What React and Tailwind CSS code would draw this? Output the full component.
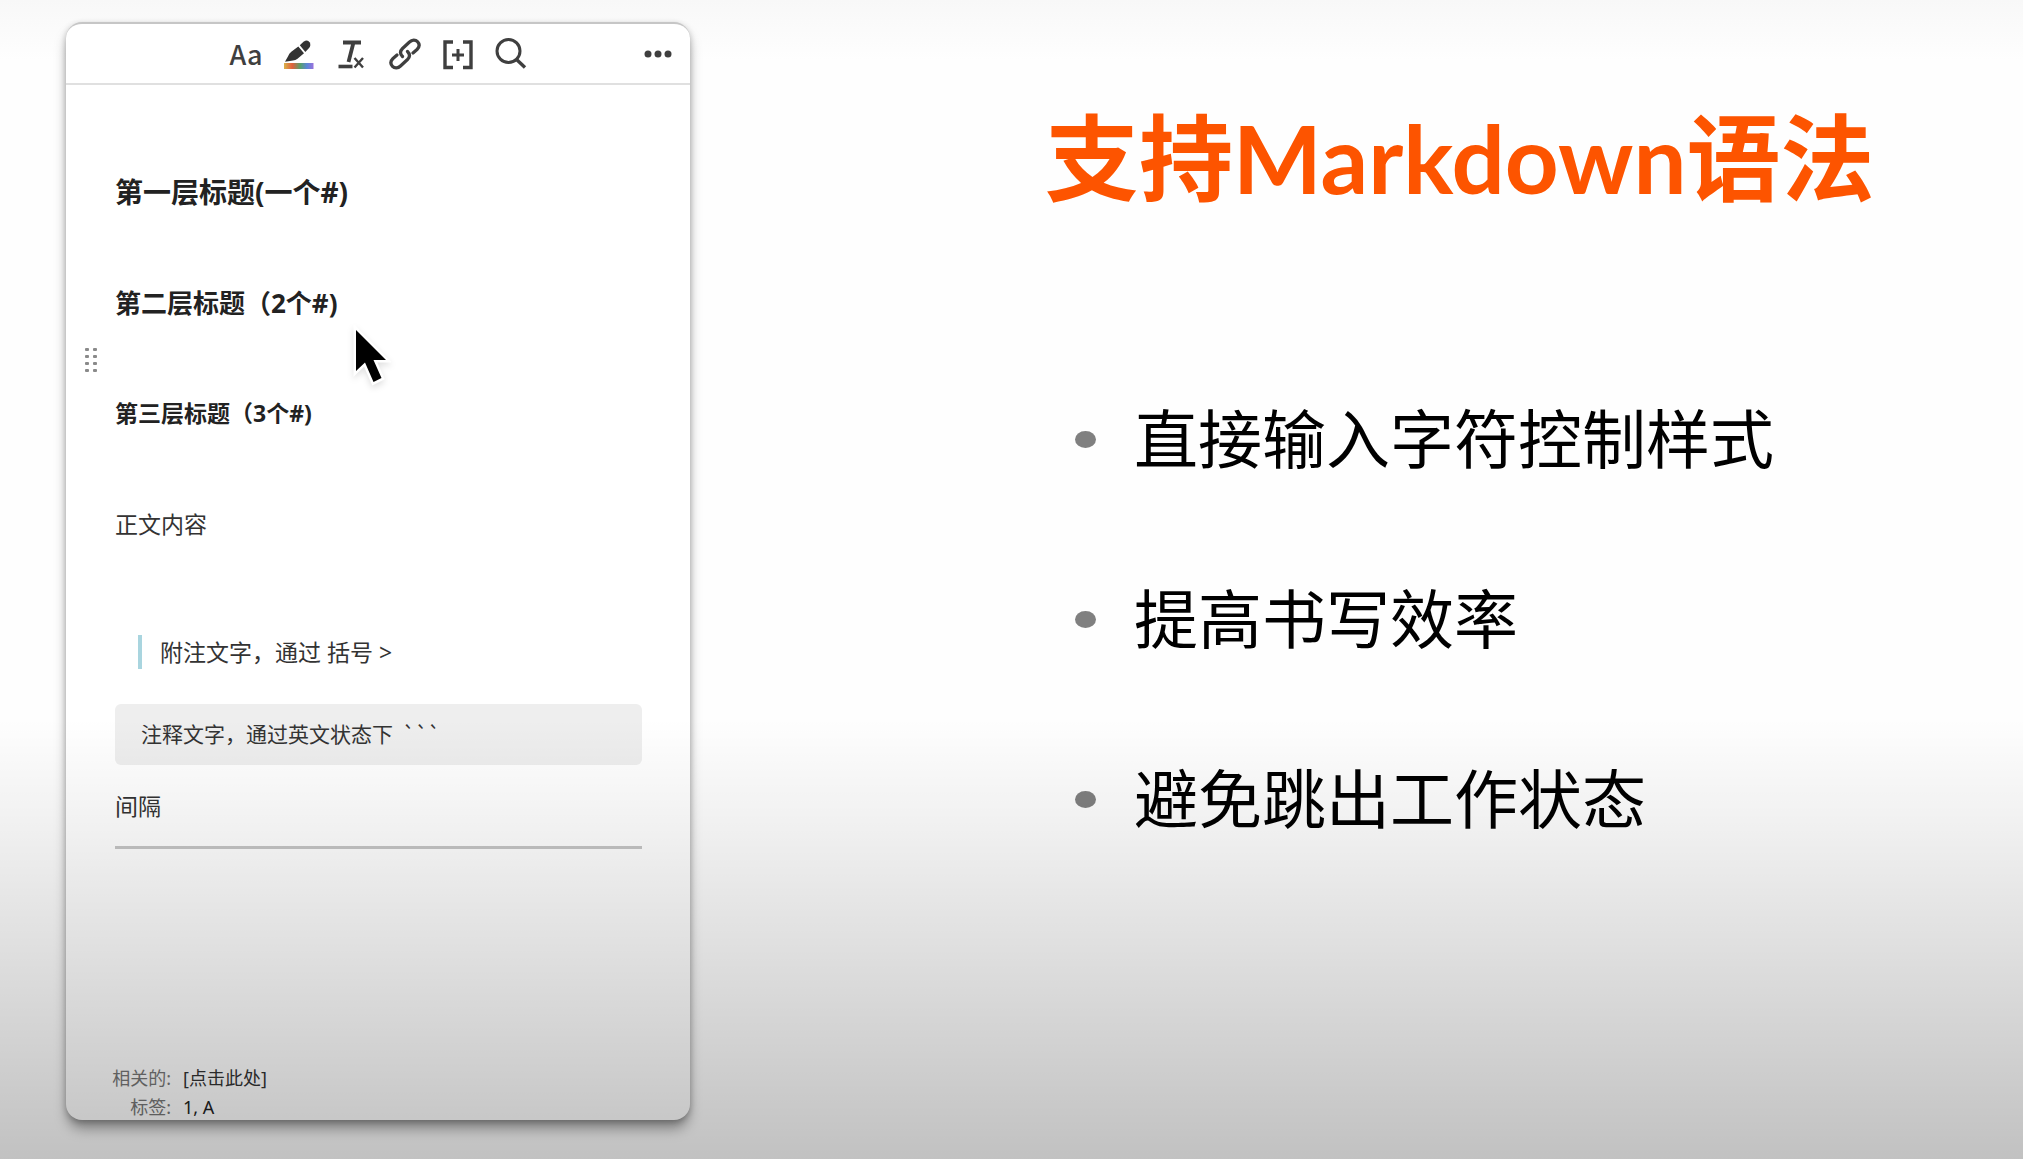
const toolButton = "flex h-8 w-8 items-center justify-center text-[#3f3f3f]";

function HighlighterIcon() {
  return (
    <svg viewBox="0 0 32 32" className="h-8 w-8">
      <defs>
        <linearGradient id="rainbow" x1="0" x2="1" y1="0" y2="0">
          <stop offset="0" stopColor="#d8b24a" />
          <stop offset="0.28" stopColor="#e2603c" />
          <stop offset="0.55" stopColor="#57a06a" />
          <stop offset="0.78" stopColor="#5a86d8" />
          <stop offset="1" stopColor="#9a72dc" />
        </linearGradient>
      </defs>
      <rect x="1" y="25" width="29.500" height="6" fill="url(#rainbow)" />
      <path d="M16.800 7.200 20.500 3.800Q24.500 1.200 26.600 4.200 28.400 7.500 25.800 10.300L22.300 14Z" fill="#333" />
      <path d="M15.300 8.400 21 15.300 14.500 20.800Q12.500 22.300 10 22.600L2 23.700 5.200 18Q6 15.500 8.300 13.800Z" fill="#333" />
    </svg>
  );
}

function ClearFormatIcon() {
  return (
    <svg viewBox="0 0 32 32" className="h-8 w-8" fill="none" stroke="currentColor">
      <path d="M7 4.500H25M17.500 4.500 12.500 24" strokeWidth="3.800" />
      <path d="M2.500 28.500H16.500" strokeWidth="3.600" />
      <path d="M18.500 20 27 29.500M27 20 18.500 29.500" strokeWidth="2.400" />
    </svg>
  );
}

function LinkIcon() {
  return (
    <svg viewBox="0 0 32 32" className="h-8 w-8" fill="none" stroke="currentColor" strokeWidth="3.200" strokeLinecap="round" strokeLinejoin="round">
      <path d="M13.500 18.500C10.500 15.500 11.500 12.500 13.500 10.500L20.500 4C23 1.500 26.500 1.500 28.500 3.700 30.700 6 30.500 9 28 11.500L24 15" />
      <path d="M18.500 13.500C21.500 16.500 20.500 19.500 18.500 21.500L11.500 28C9 30.500 5.500 30.500 3.500 28.300 1.300 26 1.500 23 4 20.500L8 17" />
    </svg>
  );
}

function BracketIcon() {
  return (
    <svg viewBox="0 0 32 32" className="h-8 w-8" fill="none" stroke="currentColor" strokeWidth="3.400">
      <path d="M11 4H3V29.500H11M21 4H29V29.500H21" />
      <path d="M16 11V23M10 17H22" strokeWidth="3" />
    </svg>
  );
}

function SearchIcon() {
  return (
    <svg viewBox="0 0 32 32" className="h-8 w-8" fill="none" stroke="currentColor">
      <circle cx="13.500" cy="13" r="11.500" strokeWidth="3" />
      <path d="M21 21 30 29.500" strokeWidth="3.400" />
    </svg>
  );
}

function DotsIcon() {
  return (
    <svg viewBox="0 0 32 32" className="h-8 w-8" fill="currentColor">
      <circle cx="6" cy="16" r="3.500" />
      <circle cx="16" cy="16" r="3.500" />
      <circle cx="26" cy="16" r="3.500" />
    </svg>
  );
}

function Toolbar() {
  return (
    <div className="flex h-[61px] shrink-0 items-center border-b-2 border-[#e0e0e0] pr-4 pl-[164px]">
      <div className="flex items-center gap-[21px]">
        <button type="button" aria-label="字体" className={toolButton}>
          <span className="font-['Noto_Sans_CJK_SC',sans-serif] text-[27px] leading-8 font-medium">Aa</span>
        </button>
        <button type="button" aria-label="高亮" className={toolButton}><HighlighterIcon /></button>
        <button type="button" aria-label="清除格式" className={toolButton}><ClearFormatIcon /></button>
        <button type="button" aria-label="链接" className={toolButton}><LinkIcon /></button>
        <button type="button" aria-label="插入" className={toolButton}><BracketIcon /></button>
        <button type="button" aria-label="搜索" className={toolButton}><SearchIcon /></button>
      </div>
      <button type="button" aria-label="更多" className={toolButton + " ml-auto"}><DotsIcon /></button>
    </div>
  );
}

function DragHandle() {
  return (
    <svg viewBox="0 0 14 26" className="absolute top-[262px] left-[18px] h-[26px] w-[14px]" fill="#8a8a8a">
      {[2, 9, 16, 23].map((y) => (
        <g key={y}>
          <rect x="1" y={y - 1} width="4" height="3" rx="1" />
          <rect x="9" y={y - 1} width="4" height="3" rx="1" />
        </g>
      ))}
    </svg>
  );
}

function Pointer() {
  return (
    <svg viewBox="0 0 40 62" className="absolute top-[240px] left-[285px] h-[62px] w-[40px] drop-shadow-md">
      <path
        d="M5 5V46L14 37.500 22.500 57 30.500 53 22.500 35H35Z"
        fill="#000"
        stroke="#fff"
        strokeWidth="5"
        strokeLinejoin="miter"
        paintOrder="stroke"
      />
    </svg>
  );
}

function NoteCard() {
  return (
    <article className="relative mt-[22px] mb-[39px] ml-[66px] flex w-[31%] max-w-[624px] shrink-0 flex-col rounded-2xl border-t-2 border-[#c6c6c6] bg-white shadow-[0_10px_14px_-2px_rgba(0,0,0,0.38),0_2px_6px_rgba(0,0,0,0.22)]">
      <Toolbar />
      <div className="relative flex flex-1 flex-col pt-[87px] pr-12 pl-[49px] text-[#333]">
        <h1 className="text-[28px] leading-10 font-bold text-[#222]">第一层标题(一个#)</h1>
        <h2 className="mt-[71px] text-[26px] leading-10 font-bold text-[#222]">第二层标题（2个#)</h2>
        <h3 className="mt-[70px] text-[23px] leading-10 font-bold text-[#222]">第三层标题（3个#)</h3>
        <p className="mt-[71px] text-[23px] leading-10">正文内容</p>
        <blockquote className="mt-[91px] ml-[23px] border-l-4 border-[#a9d5df] pl-[18px] text-[23px] leading-[34px]">
          附注文字，通过 括号 &gt;
        </blockquote>
        <pre className="mt-[35px] rounded-md bg-[#eee] px-[26px] pb-0.5 font-['Noto_Sans_CJK_SC',sans-serif] text-[21px] leading-[59px]">
          <code className="font-['Noto_Sans_CJK_SC',sans-serif]">注释文字，通过英文状态下  ```</code>
        </pre>
        <p className="mt-[21px] text-[23px] leading-10">间隔</p>
        <hr className="mt-[20px] border-t-[3px] border-[#c6c6c6]" />
        <DragHandle />
        <Pointer />
        <dl className="mt-auto -mb-0.5 -ml-2 grid grid-cols-[64px_1fr] gap-x-3 text-[18px] leading-[29px] whitespace-nowrap">
          <dt className="text-right text-[#777]">相关的:</dt>
          <dd><a href="#related" className="text-[#333]">[点击此处]</a></dd>
          <dt className="text-right text-[#777]">标签:</dt>
          <dd className="text-[#222]">1, A</dd>
        </dl>
      </div>
    </article>
  );
}

const points = ["直接输入字符控制样式", "提高书写效率", "避免跳出工作状态"];

export default function App() {
  return (
    <main className="relative flex min-h-screen bg-[linear-gradient(#f8f8f8,#fefefe_60px)] font-['Noto_Sans','Noto_Sans_CJK_SC',sans-serif]">
      <NoteCard />
      <section className="min-w-0 flex-1 pt-[98px] pl-[355px]">
        <h2 className="font-['Lato','Noto_Sans_CJK_SC',sans-serif] text-[94px] leading-[120px] font-bold whitespace-nowrap text-[#fd5400]">支持Markdown语法</h2>
        <ul className="mt-[177px] flex flex-col gap-[100px] pl-[30px]">
          {points.map((point) => (
            <li key={point} className="flex items-center gap-[38px] font-['Noto_Sans_CJK_SC',sans-serif] text-[64px] leading-20 whitespace-nowrap text-black">
              <span className="mt-2 h-[17px] w-[21px] rounded-[50%] bg-[#808080]" />
              {point}
            </li>
          ))}
        </ul>
      </section>
      <div className="pointer-events-none absolute inset-0 bg-[linear-gradient(to_bottom,transparent_62%,rgba(0,0,0,0.06)_72%,rgba(0,0,0,0.24)_100%)]" />
    </main>
  );
}
